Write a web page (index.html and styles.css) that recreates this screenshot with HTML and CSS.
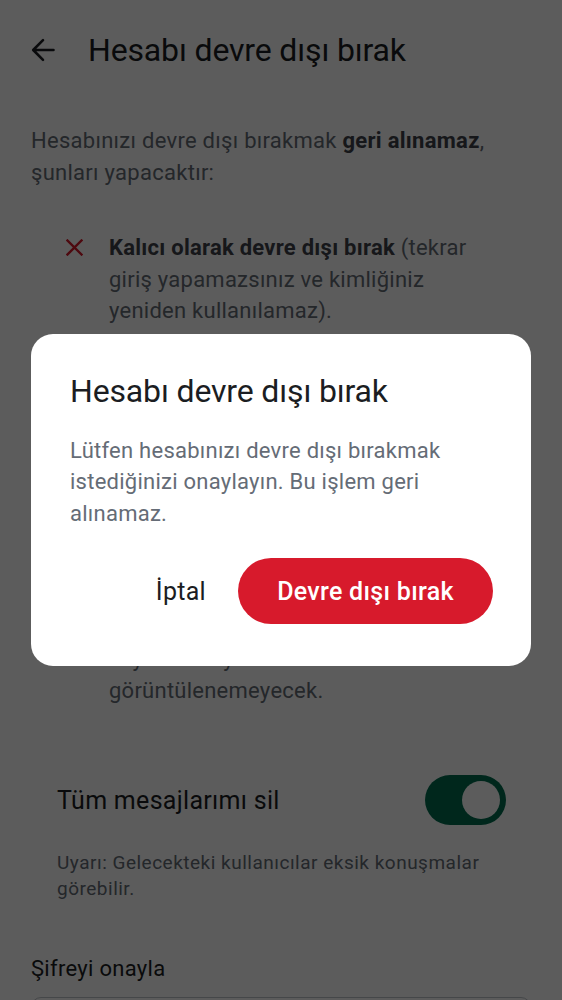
FILE: index.html
```html
<!DOCTYPE html>
<html lang="tr">
<head>
<meta charset="utf-8">
<title>Hesabı devre dışı bırak</title>
<link rel="stylesheet" href="styles.css">
</head>
<body>
<div class="page">
  <header class="topbar">
    <svg class="back" width="24" height="24" viewBox="0 0 24 24" aria-hidden="true">
      <path d="M22.5 12H2.5M12 2.2L2.2 12L12 21.8" fill="none" stroke="#1b1d22" stroke-width="2.6" stroke-linecap="round" stroke-linejoin="round"/>
    </svg>
    <h1 class="topbar-title">Hesabı devre dışı bırak</h1>
  </header>

  <main class="content">
    <p class="intro">Hesabınızı devre dışı bırakmak <b>geri alınamaz</b>, şunları yapacaktır:</p>

    <ul class="effects">
      <li class="effect">
        <svg class="xicon" width="17" height="17" viewBox="0 0 17 17" aria-hidden="true">
          <path d="M1.5 1.5L15.5 15.5M15.5 1.5L1.5 15.5" stroke="#d71a2c" stroke-width="2.4" stroke-linecap="square"/>
        </svg>
        <span><b>Kalıcı olarak devre dışı bırak</b> (tekrar giriş yapamazsınız ve kimliğiniz yeniden kullanılamaz).</span>
      </li>
      <li class="effect">
        <svg class="xicon" width="17" height="17" viewBox="0 0 17 17" aria-hidden="true">
          <path d="M1.5 1.5L15.5 15.5M15.5 1.5L1.5 15.5" stroke="#d71a2c" stroke-width="2.4" stroke-linecap="square"/>
        </svg>
        <span>Sizi tüm sohbet odalarından <b>çıkaracaktır</b>.</span>
      </li>
      <li class="effect">
        <svg class="xicon" width="17" height="17" viewBox="0 0 17 17" aria-hidden="true">
          <path d="M1.5 1.5L15.5 15.5M15.5 1.5L1.5 15.5" stroke="#d71a2c" stroke-width="2.4" stroke-linecap="square"/>
        </svg>
        <span>Hesap bilgilerinizi kimlik sunucumuzdan <b>silecektir</b>.</span>
      </li>
      <li class="effect">
        <svg class="xicon" width="17" height="17" viewBox="0 0 17 17" aria-hidden="true">
          <path d="M1.5 1.5L15.5 15.5M15.5 1.5L1.5 15.5" stroke="#d71a2c" stroke-width="2.4" stroke-linecap="square"/>
        </svg>
        <span>Mesajlarınız kayıtlı kullanıcılar tarafından görülmeye devam edecek, ancak silmeyi seçerseniz yeni veya kayıtlı olmayan kullanıcılar tarafından görüntülenemeyecek.</span>
      </li>
    </ul>

    <div class="toggle-row">
      <span class="toggle-label">Tüm mesajlarımı sil</span>
      <span class="switch" role="switch" aria-checked="true"><span class="thumb"></span></span>
    </div>
    <p class="warning">Uyarı: Gelecekteki kullanıcılar eksik konuşmalar görebilir.</p>

    <label class="field-label">Şifreyi onayla</label>
    <div class="field"></div>
  </main>
</div>

<div class="scrim">
  <div class="dialog" role="dialog">
    <h2 class="dialog-title">Hesabı devre dışı bırak</h2>
    <p class="dialog-text">Lütfen hesabınızı devre dışı bırakmak istediğinizi onaylayın. Bu işlem geri alınamaz.</p>
    <div class="dialog-actions">
      <button class="btn-text">İptal</button>
      <button class="btn-danger">Devre dışı bırak</button>
    </div>
  </div>
</div>
</body>
</html>
```

FILE: styles.css
```css
* { box-sizing: border-box; }

html, body {
  margin: 0;
  padding: 0;
  background: #ffffff;
  font-family: Roboto, "Noto Sans", "Liberation Sans", sans-serif;
  color: #1b1d22;
}

.page {
  min-height: 1000px;
  overflow: hidden;
}

.topbar {
  height: 100px;
  display: flex;
  align-items: center;
  padding: 0 31px;
  gap: 33px;
}

.back { flex: none; }

.topbar-title {
  margin: 0;
  font-size: 32px;
  font-weight: 400;
  line-height: 40px;
  letter-spacing: -0.15px;
  color: #1b1d22;
}

.content {
  padding: 25px 31px 0;
}

.intro {
  margin: 0;
  font-size: 22px;
  line-height: 31.5px;
  letter-spacing: 0.28px;
  color: #656c76;
}

.intro b, .effect b {
  font-weight: 700;
  color: #3d424a;
}

.effects {
  list-style: none;
  margin: 44px 0 0;
  padding: 0 35px;
  display: flex;
  flex-direction: column;
  gap: 32px;
}

.effect {
  display: flex;
  align-items: flex-start;
  gap: 26px;
  font-size: 22px;
  line-height: 31.5px;
  letter-spacing: 0.25px;
  color: #656c76;
}

.xicon {
  flex: none;
  margin-top: 7px;
}

.toggle-row {
  margin-top: 69px;
  padding: 0 25px 0 26px;
  display: flex;
  align-items: center;
  justify-content: space-between;
}

.toggle-label {
  font-size: 25px;
  letter-spacing: 0.3px;
  color: #1b1d22;
}

.switch {
  width: 81px;
  height: 50px;
  border-radius: 25px;
  background: #006d4f;
  display: flex;
  align-items: center;
  justify-content: flex-end;
  padding-right: 6px;
}

.thumb {
  width: 38px;
  height: 38px;
  border-radius: 50%;
  background: #ffffff;
}

.warning {
  margin: 25px 0 0;
  padding: 0 26px;
  font-size: 19px;
  line-height: 26px;
  letter-spacing: 0.5px;
  color: #656c76;
}

.field-label {
  display: block;
  margin-top: 51px;
  font-size: 22px;
  line-height: 31.5px;
  letter-spacing: 0.3px;
  color: #1b1d22;
}

.field {
  margin-top: 12px;
  height: 70px;
  border: 1.5px solid #c0c4ca;
  border-radius: 10px;
}

.scrim {
  position: fixed;
  inset: 0;
  background: rgba(0, 0, 0, 0.64);
  display: flex;
  align-items: center;
  justify-content: center;
  padding: 0 31px;
}

.dialog {
  width: 100%;
  background: #ffffff;
  border-radius: 22px;
  padding: 37px 38px 42px 39px;
}

.dialog-title {
  margin: 0;
  font-size: 32px;
  font-weight: 400;
  line-height: 40px;
  letter-spacing: -0.15px;
  color: #1b1d22;
}

.dialog-text {
  margin: 24px 0 0;
  font-size: 22px;
  line-height: 31.5px;
  letter-spacing: 0.25px;
  color: #656c76;
}

.dialog-actions {
  margin-top: 29px;
  display: flex;
  justify-content: flex-end;
  align-items: center;
  gap: 6px;
}

.btn-text, .btn-danger {
  font-family: inherit;
  font-size: 25px;
  font-weight: 500;
  letter-spacing: 0.3px;
  height: 66px;
  border: none;
  border-radius: 33px;
  cursor: pointer;
}

.btn-text {
  background: transparent;
  color: #1b1d22;
  padding: 0 26px;
  font-weight: 400;
}

.btn-danger {
  background: #d71a2c;
  color: #ffffff;
  width: 255px;
  padding: 0 20px;
}
```
